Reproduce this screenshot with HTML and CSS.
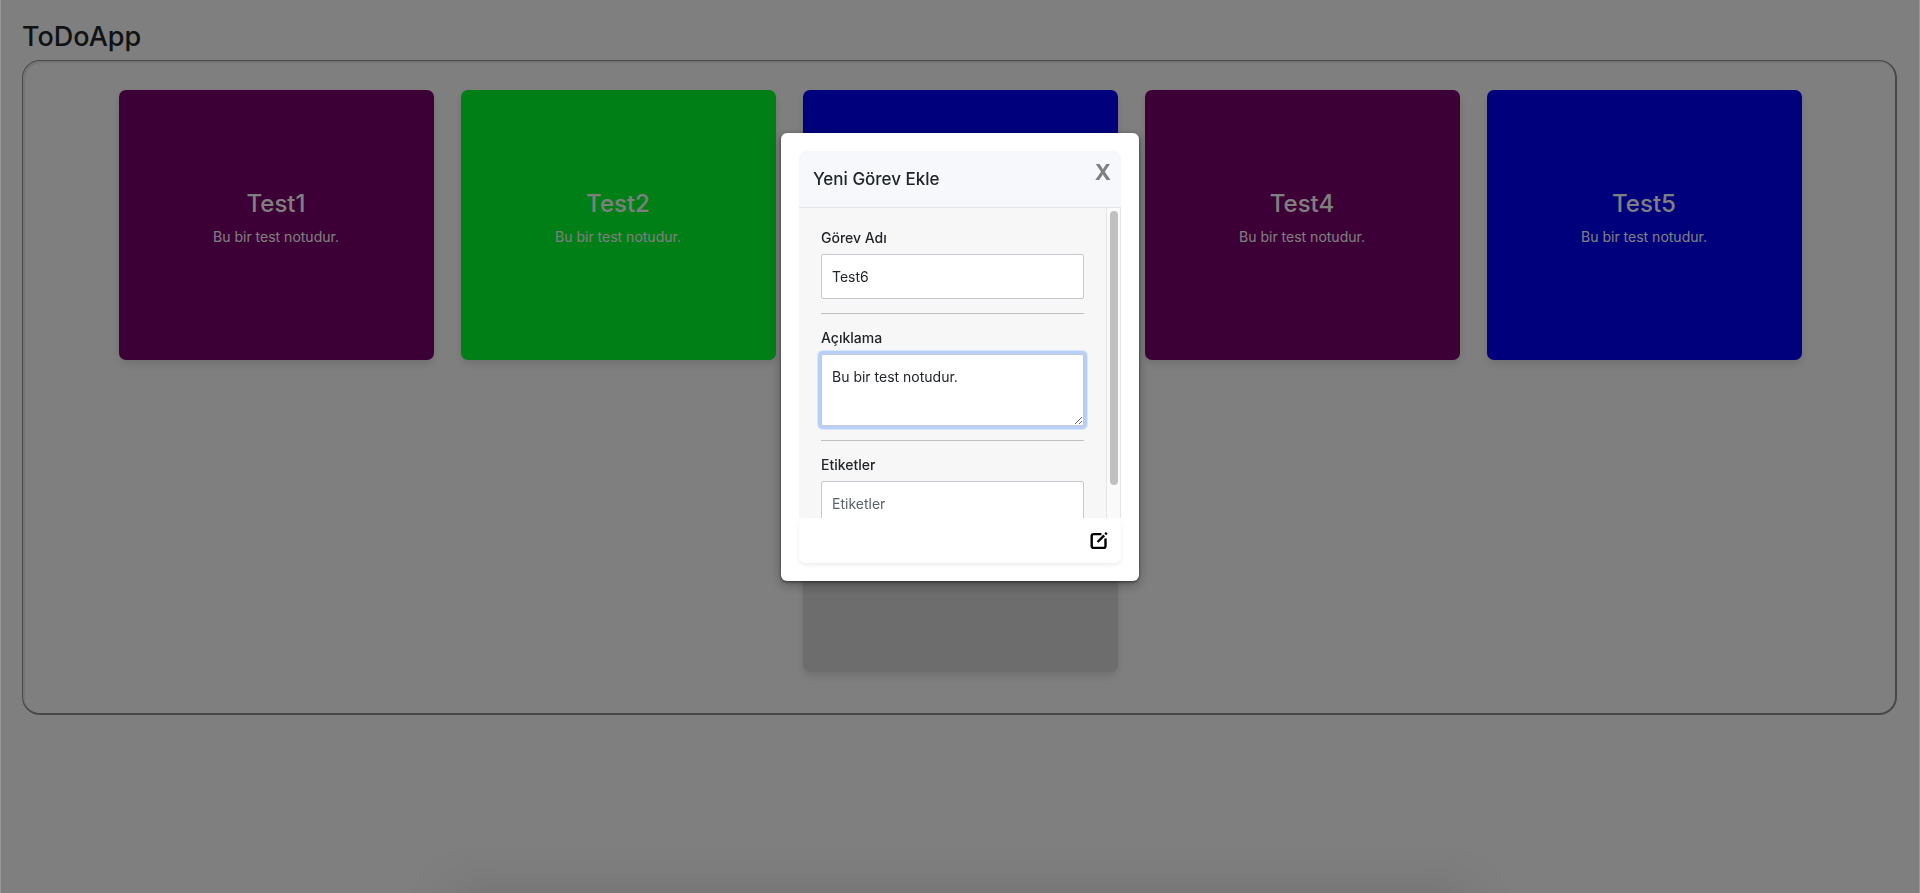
FILE: index.html
```html
<!DOCTYPE html>
<html lang="tr">
<head>
<meta charset="utf-8">
<title>ToDoApp</title>
<link rel="stylesheet" href="styles.css">
</head>
<body>
<div class="page">
  <h1 class="page-title">ToDoApp</h1>
  <main class="board">
    <article class="card card-purple"><h2 class="card-title">Test1</h2><p class="card-note">Bu bir test notudur.</p></article>
    <article class="card card-green"><h2 class="card-title">Test2</h2><p class="card-note">Bu bir test notudur.</p></article>
    <article class="card card-blue"></article>
    <article class="card card-purple"><h2 class="card-title">Test4</h2><p class="card-note">Bu bir test notudur.</p></article>
    <article class="card card-blue"><h2 class="card-title">Test5</h2><p class="card-note">Bu bir test notudur.</p></article>
    <article class="card card-new"></article>
  </main>
</div>
<div class="overlay">
  <div class="modal" role="dialog" aria-labelledby="modal-title">
    <form class="panel">
      <header class="panel-header">
        <h2 class="panel-title" id="modal-title">Yeni Görev Ekle</h2>
        <button class="close" type="button">X</button>
      </header>
      <div class="panel-body">
        <div class="fields">
          <label class="label" for="task-name">Görev Adı</label>
          <input class="control" id="task-name" type="text" value="Test6">
          <hr class="rule">
          <label class="label" for="task-note">Açıklama</label>
          <textarea class="control control-area is-focused" id="task-note">Bu bir test notudur.</textarea>
          <hr class="rule">
          <label class="label" for="task-tags">Etiketler</label>
          <input class="control" id="task-tags" type="text" placeholder="Etiketler">
        </div>
        <div class="track"><div class="thumb"></div></div>
      </div>
      <footer class="panel-footer">
        <button class="save" type="submit" aria-label="Kaydet">
          <svg class="save-icon" viewBox="0 0 18 18" fill="none" stroke="#000">
            <path d="M11.5 2.1H3.6Q1.7 2.1 1.7 4V14Q1.7 15.9 3.6 15.9H13.6Q15.5 15.9 15.5 14V6.5" stroke-width="2.4"/>
            <path d="M7.6 10L14.2 3.4" stroke-width="2.4"/>
            <path d="M15.2 2.4L16.8 0.8" stroke-width="2.4"/>
          </svg>
        </button>
      </footer>
    </form>
  </div>
</div>
<div class="edge-shadow"></div>
</body>
</html>
```
FILE: styles.css
```css
* { box-sizing: border-box; }
body {
  margin: 0;
  background: #fff;
  color: #212529;
  font: 14px/21px Inter, "Liberation Sans", sans-serif;
}
h1, h2, p { margin: 0; }
h1, h2 { font-weight: 500; }
button { border: 0; padding: 0; background: none; cursor: pointer; }

.page { min-height: 100vh; padding: 20px 23px 20px 22px; }
.page-title { font-size: 27px; line-height: 34px; margin-bottom: 6px; }
.board {
  display: flex;
  flex-wrap: wrap;
  justify-content: center;
  gap: 42px 27px;
  padding: 29px 79px 41px 81px;
  border: solid #909090;
  border-width: 1px 2px 2px 1px;
  border-radius: 18px;
  box-shadow: inset 2px 2px #ebebeb;
}
.card {
  display: flex;
  flex-direction: column;
  align-items: center;
  justify-content: center;
  gap: 7px;
  width: 315px;
  height: 270px;
  padding-bottom: 14px;
  border-radius: 7px;
  color: #fff;
  box-shadow: 0 4px 9px rgba(0, 0, 0, .12);
}
.card-title { font-size: 24px; line-height: 30px; }
.card-note { font-size: 14px; line-height: 21px; }
.card-purple { background: #78006c; }
.card-green { background: #00fe2e; }
.card-blue { background: #0000f8; }
.card-new { background: #dadada; }

.overlay {
  position: fixed;
  inset: 0;
  display: flex;
  align-items: flex-start;
  justify-content: center;
  padding-top: 133px;
  border: solid rgba(255, 255, 255, .2);
  border-width: 0 1px;
  background: rgba(0, 0, 0, .5);
}
.modal {
  width: 358px;
  padding: 18px;
  border-radius: 6px;
  background: #fff;
  box-shadow: 0 1px 3px rgba(0, 0, 0, .5), 0 4px 12px rgba(0, 0, 0, .3);
}
.panel { border-radius: 7px; }
.panel-header {
  display: flex;
  justify-content: space-between;
  align-items: flex-start;
  padding: 10px 10px 10px 14px;
  border-radius: 7px 7px 0 0;
  border-bottom: 1px solid #e2e5e9;
  background: #f6f8fb;
}
.panel-title { font-size: 17px; line-height: 36px; }
.close { color: #808080; font: 700 22px/22px Inter, "Liberation Sans", sans-serif; }
.panel-body { display: flex; height: 310px; background: #f7f7f7; }
.fields { flex: 1; min-width: 0; padding: 19px 22px; overflow: auto; scrollbar-width: none; }
.label { display: block; margin-bottom: 6px; font-weight: 500; }
.control {
  display: block;
  width: 100%;
  height: 45px;
  padding: 0 10px;
  border: 1px solid #c4cad0;
  border-radius: 2px;
  background: #fff;
  color: #212529;
  font: 14px/21px Inter, "Liberation Sans", sans-serif;
}
.control::placeholder { color: #5c6268; opacity: 1; }
.control-area { height: 72px; padding-top: 11px; resize: vertical; }
.control.is-focused { outline: none; box-shadow: 0 0 0 3px #b8d0f8, 0 0 0 4px #dbe7fb; }
.rule { height: 1px; margin: 14px 0 13px; border: 0; background: #bfbfbf; }
.track {
  width: 15px;
  padding: 3px;
  border: solid #e6e6e6;
  border-width: 0 1px;
  background: #fafafa;
}
.thumb { height: 90%; margin-right: -1px; border-radius: 4px; background: #c0c0c0; }
.panel-footer {
  display: flex;
  align-items: center;
  justify-content: flex-end;
  height: 45px;
  padding-right: 13px;
  border-radius: 7px;
  background: #fff;
  box-shadow: 0 2px 4px rgba(0, 0, 0, .08);
}
.save { width: 18px; height: 18px; }
.save-icon { display: block; width: 18px; height: 18px; }

.edge-shadow {
  position: fixed;
  left: 24%;
  right: 24%;
  bottom: -20px;
  height: 10px;
  pointer-events: none;
  box-shadow: 0 0 50px 10px rgba(0, 0, 0, .15);
}
```
